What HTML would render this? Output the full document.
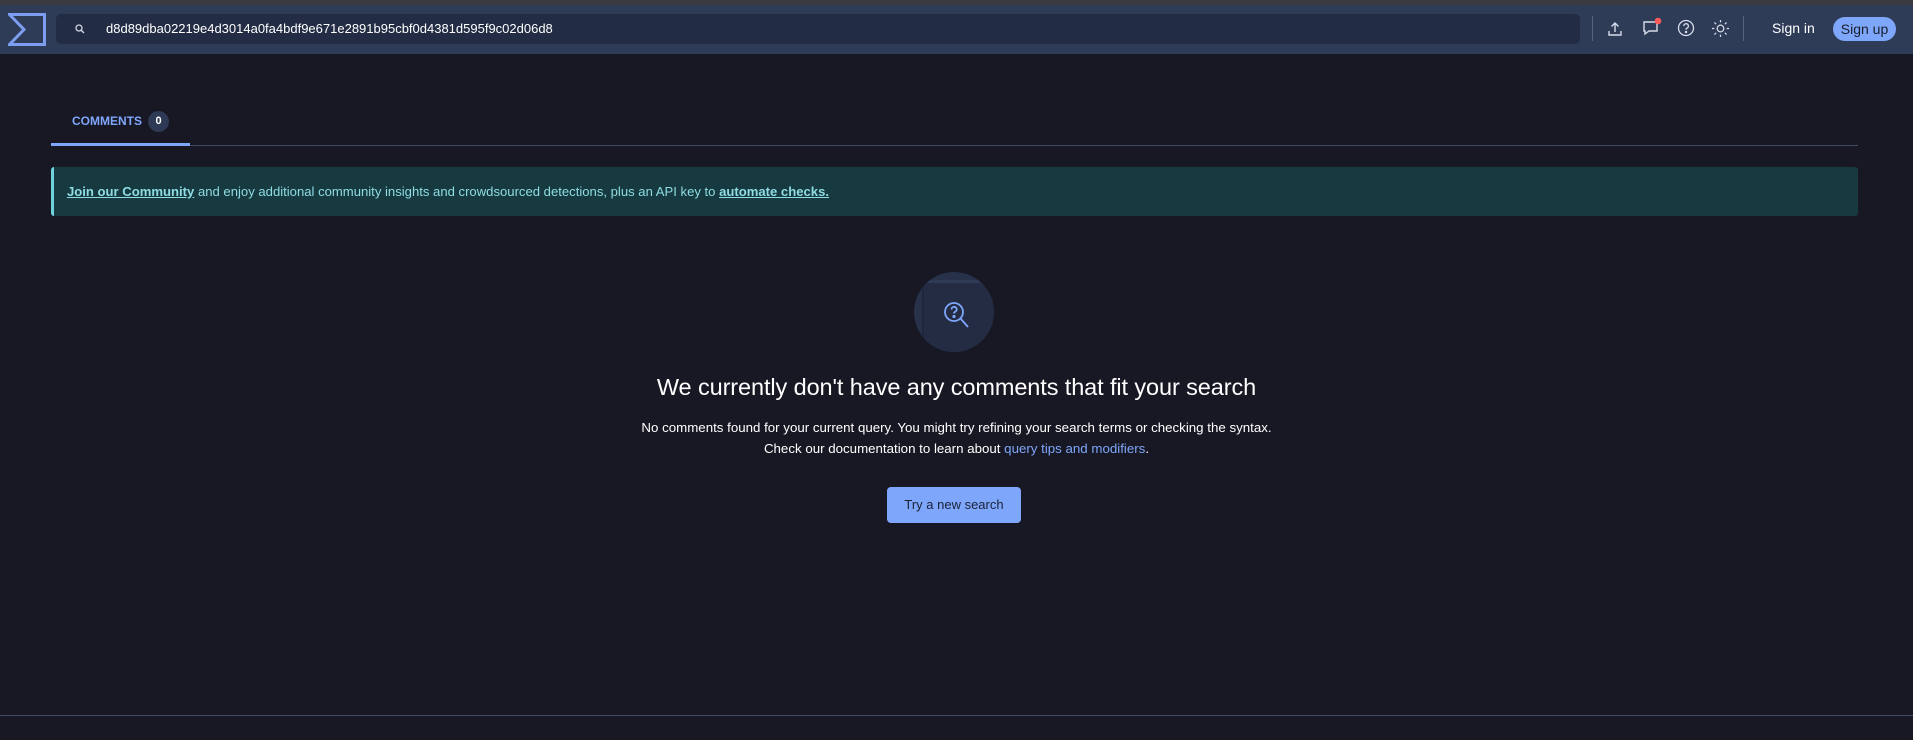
<!DOCTYPE html>
<html><head><meta charset="utf-8"><style>
*{margin:0;padding:0;box-sizing:border-box}
body{width:1913px;height:740px;overflow:hidden;background:#181824;font-family:"Liberation Sans",sans-serif;color:#fff;position:relative}
.abs{position:absolute}
</style></head><body>
<div class="abs" style="left:0;top:0;width:1913px;height:5px;background:#3a3a40"></div>
<div class="abs" style="left:0;top:5px;width:1913px;height:49px;background:#2e3c58"></div>
<svg class="abs" style="left:8px;top:13px" width="38" height="33" viewBox="0 0 38 33"><path d="M1.5 1.5H36.5V31.5H1.5L16 16.5Z" fill="none" stroke="#7d9ef0" stroke-width="3"/></svg>
<div class="abs" style="left:56px;top:14px;width:1524px;height:30px;background:#222c44;border-radius:5px"></div>
<svg class="abs" style="left:75px;top:24px" width="10" height="10" viewBox="0 0 10 10"><circle cx="4" cy="4" r="3" fill="none" stroke="#cfd6e6" stroke-width="1.3"/><path d="M6.2 6.2L9 9" stroke="#cfd6e6" stroke-width="1.4"/></svg>
<div class="abs" style="left:106px;top:21px;font-size:13px;color:#fff">d8d89dba02219e4d3014a0fa4bdf9e671e2891b95cbf0d4381d595f9c02d06d8</div>
<div class="abs" style="left:1592px;top:16px;width:1px;height:25px;background:#56627e"></div>
<svg class="abs" style="left:1606px;top:20px" width="18" height="18" viewBox="0 0 18 18" fill="none" stroke="#d6dcea" stroke-width="1.4"><path d="M9 12V3M5.5 6.5L9 3l3.5 3.5M3 11v4h12v-4"/></svg>
<svg class="abs" style="left:1641px;top:16px" width="24" height="22" viewBox="0 0 24 22" fill="none"><path d="M3 6h13v9H8l-4 3v-3H3z" stroke="#d6dcea" stroke-width="1.4"/><circle cx="17" cy="5" r="3.3" fill="#ff5a5a"/></svg>
<svg class="abs" style="left:1677px;top:19px" width="18" height="18" viewBox="0 0 18 18" fill="none" stroke="#d6dcea" stroke-width="1.3"><circle cx="9" cy="9" r="7.5"/><path d="M6.8 7a2.3 2.3 0 1 1 3 2.2c-.6.3-.8.7-.8 1.5"/><circle cx="9" cy="13" r=".6" fill="#d6dcea"/></svg>
<svg class="abs" style="left:1711px;top:19px" width="19" height="19" viewBox="0 0 20 20" fill="none" stroke="#d6dcea" stroke-width="1.3"><circle cx="10" cy="10" r="3.5"/><path d="M10 1v2.5M10 16.5V19M1 10h2.5M16.5 10H19M3.6 3.6l1.8 1.8M14.6 14.6l1.8 1.8M3.6 16.4l1.8-1.8M14.6 5.4l1.8-1.8"/></svg>
<div class="abs" style="left:1743px;top:16px;width:1px;height:25px;background:#56627e"></div>
<div class="abs" style="left:1772px;top:20px;font-size:14px;color:#fff">Sign in</div>
<div class="abs" style="left:1833px;top:17px;width:63px;height:24px;background:#7ea6fa;border-radius:12px;color:#18202e;font-size:14px;text-align:center;line-height:24px">Sign up</div>

<div class="abs" style="left:72px;top:114px;font-size:12px;color:#7ea6fa;font-weight:bold">COMMENTS</div>
<div class="abs" style="left:148px;top:111px;width:21px;height:21px;border-radius:50%;background:#2e3a55;font-size:11px;color:#fff;text-align:center;line-height:21px;font-weight:bold">0</div>
<div class="abs" style="left:51px;top:145px;width:1807px;height:1px;background:#404a66"></div>
<div class="abs" style="left:51px;top:143px;width:139px;height:3px;background:#7ea6fa"></div>

<div class="abs" style="left:51px;top:167px;width:1807px;height:49px;background:#163a3f;border-left:3px solid #6fd3dc;border-radius:3px"></div>
<div class="abs" style="left:67px;top:184px;font-size:13.1px;color:#8fdce4"><b style="text-decoration:underline">Join our Community</b> and enjoy additional community insights and crowdsourced detections, plus an API key to <b style="text-decoration:underline">automate checks.</b></div>

<div class="abs" style="left:914px;top:272px;width:80px;height:80px;border-radius:50%;background:#27324a;overflow:hidden">
<div style="position:absolute;left:8px;top:8px;width:80px;height:80px;background:#232c43;border-top:3px solid #2f3b56;border-left:2px solid #1f273a"></div></div>
<svg class="abs" style="left:940px;top:299px" width="36" height="34" viewBox="0 0 36 34" fill="none" stroke="#7ea6fa" stroke-width="1.8"><circle cx="14" cy="13" r="9"/><path d="M20.5 19.5L28 28"/><path d="M11.5 10.5a2.6 2.6 0 1 1 3.4 2.4c-.7.3-.9.8-.9 1.6"/><circle cx="14" cy="17.5" r=".7" fill="#7ea6fa"/></svg>

<div class="abs" style="left:0;top:374px;width:1913px;text-align:center;font-size:23.5px;color:#fff;letter-spacing:-0.1px">We currently don't have any comments that fit your search</div>
<div class="abs" style="left:0;top:417px;width:1913px;text-align:center;font-size:13.3px;line-height:21px;color:#fff">No comments found for your current query. You might try refining your search terms or checking the syntax.<br>Check our documentation to learn about <span style="color:#7ea6fa">query tips and modifiers</span>.</div>
<div class="abs" style="left:887px;top:487px;width:134px;height:36px;background:#7ea6fa;border-radius:4px;color:#1b2236;font-size:13px;text-align:center;line-height:36px">Try a new search</div>

<div class="abs" style="left:0;top:715px;width:1913px;height:1px;background:#404a66"></div>
</body></html>
